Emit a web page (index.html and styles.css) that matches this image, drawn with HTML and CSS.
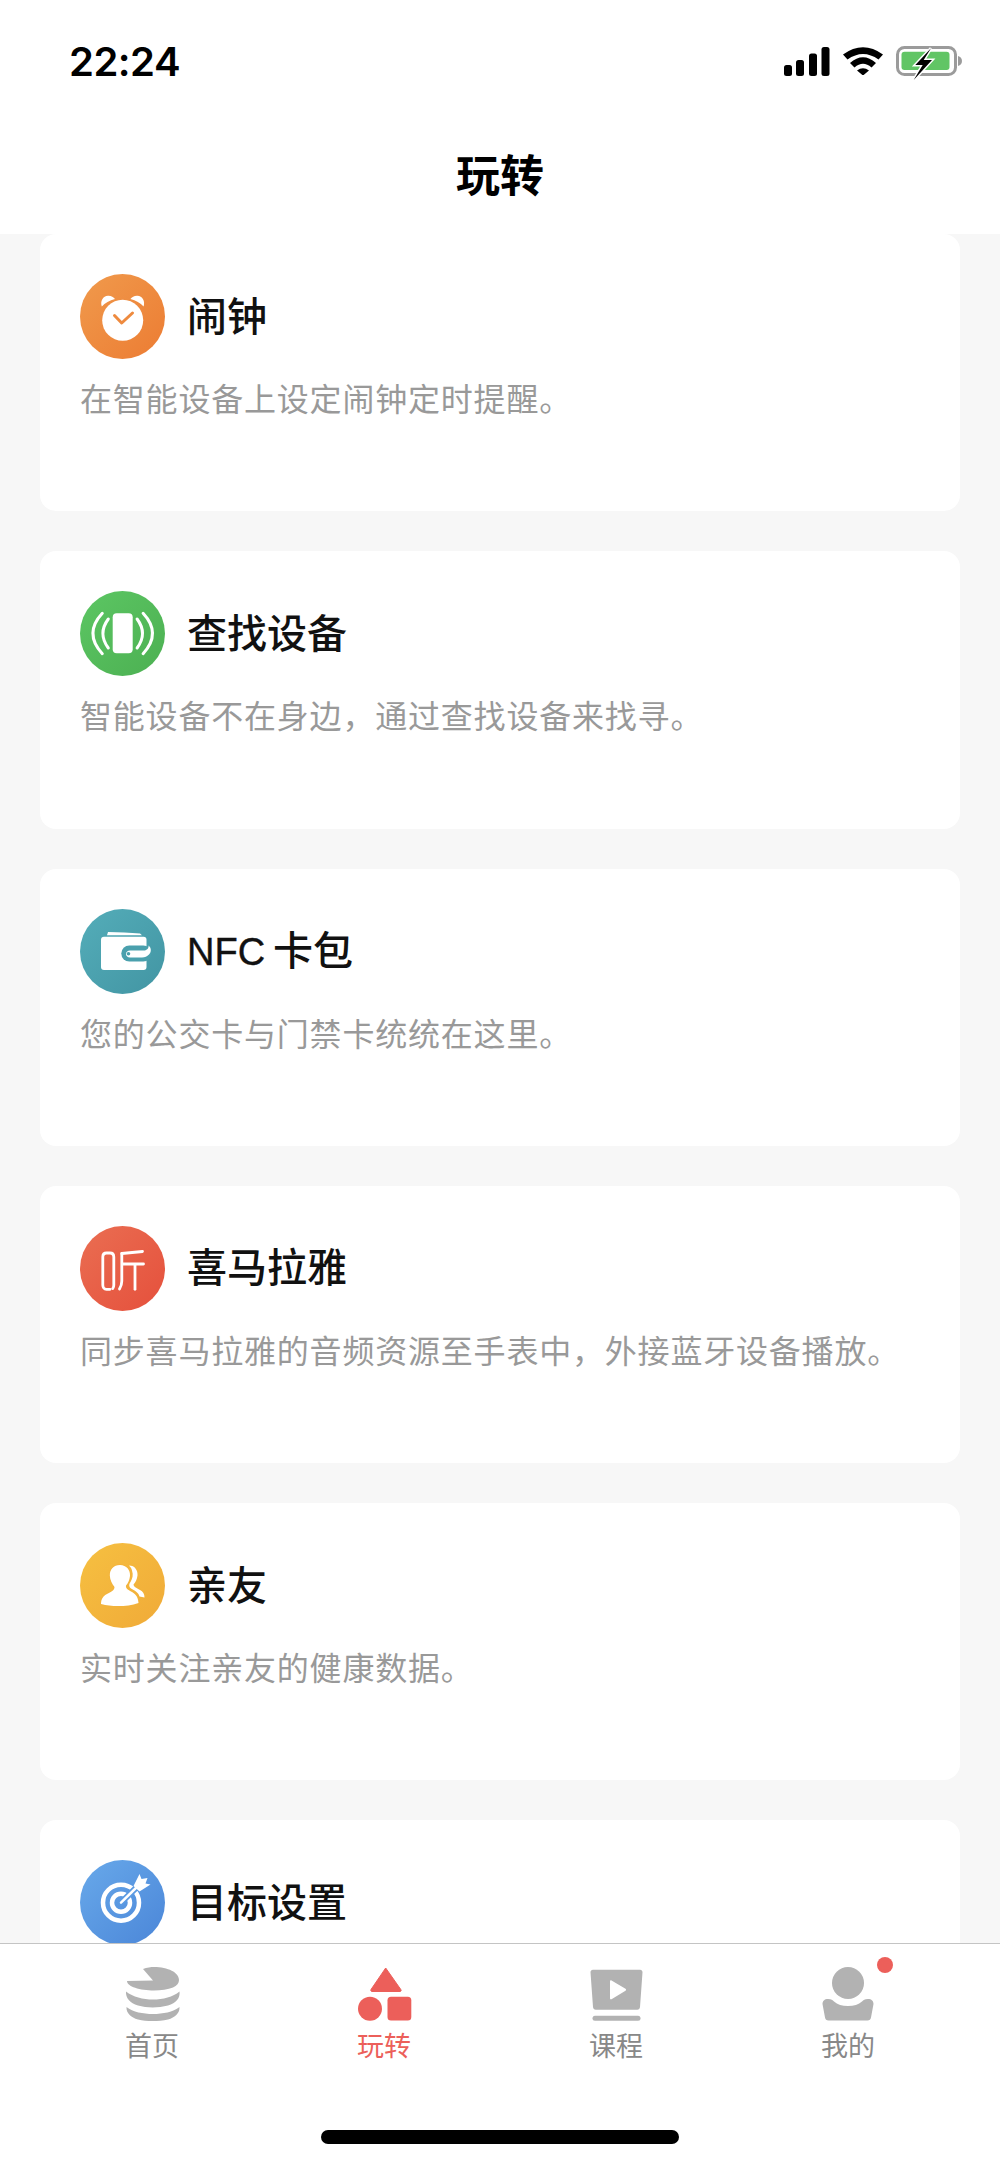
FILE: index.html
```html
<!DOCTYPE html>
<html lang="zh-CN">
<head>
    <meta charset="UTF-8">
    <meta name="viewport" content="width=device-width, initial-scale=1.0">
    <title>玩转</title>
    <link rel="stylesheet" href="styles.css">
</head>
<body>
<div class="app">
    <header class="top-bar">
        <div class="status-bar">
            <span class="time">22:24</span>
            <div class="status-icons">
                <svg class="signal" viewBox="0 0 46 29"><rect x="0" y="18" width="8" height="11" rx="2.500"/><rect x="12" y="13" width="8" height="16" rx="2.500"/><rect x="25" y="6.500" width="8" height="22.500" rx="2.500"/><rect x="37.500" y="0" width="8" height="29" rx="2.500"/></svg>
                <svg class="wifi" viewBox="0 0 40 28.500"><path d="M0 7.500Q20-7 40 7.500L35.500 12.500Q20 1.500 4.500 12.500Z"/><path d="M7 16Q20 4.500 33 16L28.500 20.500Q20 13 11.500 20.500Z"/><path d="M14 23.500Q20 19 26 23.500L20 28.500Z"/></svg>
                <svg class="battery" viewBox="0 0 66 30">
                    <rect x="1.500" y="1.500" width="58" height="27" rx="7" fill="none" stroke="#9b9b9b" stroke-width="3"/>
                    <path d="M62 10c2.500.5 4 2.500 4 5s-1.500 4.500-4 5Z" fill="#9b9b9b"/>
                    <rect x="5.500" y="5.700" width="48" height="18.300" rx="3" fill="#61c565"/>
                    <path d="M35 2.300L19.300 19H26.700L17.700 34L36 14H27.700Z" fill="#000" stroke="#fff" stroke-width="3" paint-order="stroke"/>
                </svg>
            </div>
        </div>
        <h1 class="page-title">玩转</h1>
    </header>

    <main class="feature-list">
        <section class="card">
            <div class="card-head">
                <svg class="card-icon" viewBox="0 0 85 85">
                    <defs><linearGradient id="g-orange" x1="0" y1="0" x2="1" y2="1"><stop offset="0" stop-color="#f09a4c"/><stop offset="1" stop-color="#ec7c33"/></linearGradient></defs>
                    <circle cx="42.500" cy="42.500" r="42.500" fill="url(#g-orange)"/>
                    <circle cx="42.700" cy="46.300" r="20.500" fill="#fff"/>
                    <path d="M21.800 32.500C20 27 23 22 28 21.700C31 21.500 33.500 23 35 25C29.500 26.500 25 29 21.800 32.500Z" fill="#fff"/>
                    <path d="M63.600 32.500C65.400 27 62.400 22 57.400 21.700C54.400 21.500 51.900 23 50.400 25C55.900 26.500 60.400 29 63.600 32.500Z" fill="#fff"/>
                    <path d="M34.500 41.500L41.700 49L52.500 39" fill="none" stroke="#ee8a3e" stroke-width="3" stroke-linecap="round" stroke-linejoin="round"/>
                </svg>
                <h2 class="card-title">闹钟</h2>
            </div>
            <p class="card-desc">在智能设备上设定闹钟定时提醒。</p>
        </section>

        <section class="card">
            <div class="card-head">
                <svg class="card-icon" viewBox="0 0 85 85">
                    <defs><linearGradient id="g-green" x1="0" y1="0" x2="1" y2="1"><stop offset="0" stop-color="#5cc663"/><stop offset="1" stop-color="#4cb052"/></linearGradient></defs>
                    <circle cx="42.500" cy="42.500" r="42.500" fill="url(#g-green)"/>
                    <rect x="32.700" y="22.300" width="20" height="40" rx="4" fill="#fff"/>
                    <g fill="none" stroke="#fff" stroke-width="3" stroke-linecap="round">
                        <path d="M28.300 28Q17.500 42.500 28.300 57"/>
                        <path d="M22.300 22.300Q3.500 42.500 22.300 62.700"/>
                        <path d="M57.100 28Q67.900 42.500 57.100 57"/>
                        <path d="M63.100 22.300Q81.900 42.500 63.100 62.700"/>
                    </g>
                </svg>
                <h2 class="card-title">查找设备</h2>
            </div>
            <p class="card-desc">智能设备不在身边，通过查找设备来找寻。</p>
        </section>

        <section class="card">
            <div class="card-head">
                <svg class="card-icon" viewBox="0 0 85 85">
                    <defs><linearGradient id="g-teal" x1="0" y1="0" x2="1" y2="1"><stop offset="0" stop-color="#54adb9"/><stop offset="1" stop-color="#4295a3"/></linearGradient></defs>
                    <circle cx="42.500" cy="42.500" r="42.500" fill="url(#g-teal)"/>
                    <path d="M27 26.200L28 23C39 23.300 50 23.700 60 24.500L62 26.200Z" fill="#fff"/>
                    <rect x="21" y="27.800" width="45.500" height="33.200" rx="3" fill="#fff"/>
                    <rect x="41.300" y="36.500" width="30" height="16" rx="8" fill="#4aa0ad"/>
                    <path d="M50 39.500H64C67 39.500 69 37 68.500 34.500C71.500 37 71.500 41 69 43.500C67 45.500 65 46.500 62 46.500H50C47.800 46.500 46 45.200 46 43C46 40.800 47.800 39.500 50 39.500Z" fill="#fff" transform="translate(0 2)"/>
                    <circle cx="48.500" cy="44.700" r="1.800" fill="#4aa0ad"/>
                </svg>
                <h2 class="card-title"><span class="card-title-latin">NFC</span>卡包</h2>
            </div>
            <p class="card-desc">您的公交卡与门禁卡统统在这里。</p>
        </section>

        <section class="card">
            <div class="card-head">
                <svg class="card-icon" viewBox="0 0 85 85">
                    <defs><linearGradient id="g-red" x1="0" y1="0" x2="1" y2="1"><stop offset="0" stop-color="#ea6e52"/><stop offset="1" stop-color="#e5503c"/></linearGradient></defs>
                    <circle cx="42.500" cy="42.500" r="42.500" fill="url(#g-red)"/>
                    <g fill="none" stroke="#fff" stroke-width="2.800" stroke-linecap="round" stroke-linejoin="round">
                        <path d="M30 63.300H26.500C24 63.300 22.800 61 22.800 59V31C22.800 28.500 24 27 26.500 27H30C32.500 27 33.800 28.500 33.800 31V59C33.800 60.500 33.500 61.500 32.800 62.500"/>
                        <path d="M41.800 27.500L62.500 25.500"/>
                        <path d="M41.800 27.500V55C41.800 58 41 60.500 39.500 63"/>
                        <path d="M42.500 38H63.500"/>
                        <path d="M55 38.500V63.300"/>
                    </g>
                </svg>
                <h2 class="card-title">喜马拉雅</h2>
            </div>
            <p class="card-desc">同步喜马拉雅的音频资源至手表中，外接蓝牙设备播放。</p>
        </section>

        <section class="card">
            <div class="card-head">
                <svg class="card-icon" viewBox="0 0 85 85">
                    <defs><linearGradient id="g-yellow" x1="0" y1="0" x2="1" y2="1"><stop offset="0" stop-color="#f6c041"/><stop offset="1" stop-color="#f0aa38"/></linearGradient></defs>
                    <circle cx="42.500" cy="42.500" r="42.500" fill="url(#g-yellow)"/>
                    <path d="M49 22.500C55 22.500 58 27.500 57.500 32.500C57 36.500 55.500 39.500 53.500 41.500C53.500 43.500 56 45 60 47C63 48.500 64.500 51 64.500 54.500L59.500 53.500C58.500 49.500 54.500 47.500 51 45.500C48.500 43.500 49 41 50.500 39C52.500 35.500 53.500 32 52 27.500C51.500 25.500 50.500 24 49 22.500Z" fill="#fff"/>
                    <path d="M40 22C46.500 22 50.500 27 50 33C49.500 37 48 40.500 46 42.500C45.500 45 47.500 46.500 51 48.500C55 50.500 58 53 58.500 60C52 62.500 45 63 38 63C32 63 26.500 62.500 21 61C21 56 23 53 27 51C31 49 34.500 47.500 34.500 44C32 41 30 37 29.800 32.500C29.800 26.500 33.500 22 40 22Z" fill="#fff" stroke="#f3b33c" stroke-width="1.500" paint-order="stroke"/>
                </svg>
                <h2 class="card-title">亲友</h2>
            </div>
            <p class="card-desc">实时关注亲友的健康数据。</p>
        </section>

        <section class="card">
            <div class="card-head">
                <svg class="card-icon" viewBox="0 0 85 85">
                    <defs><linearGradient id="g-blue" x1="0" y1="0" x2="1" y2="1"><stop offset="0" stop-color="#68a9ea"/><stop offset="1" stop-color="#4b86d8"/></linearGradient></defs>
                    <circle cx="42.500" cy="42.500" r="42.500" fill="url(#g-blue)"/>
                    <circle cx="41" cy="42.700" r="18" fill="none" stroke="#fff" stroke-width="4.500"/>
                    <circle cx="41" cy="42.700" r="9" fill="none" stroke="#fff" stroke-width="4.500"/>
                    <path d="M41 42.700L60 24" stroke="#5b9ae2" stroke-width="6" stroke-linecap="round"/>
                    <path d="M41 42.700L60 24" stroke="#fff" stroke-width="2.500" stroke-linecap="round"/>
                    <path d="M53.500 26L59.500 14L61.500 19L67.500 18L65.500 23.500L70.500 24.500L59.500 31.500Z" fill="#fff"/>
                </svg>
                <h2 class="card-title">目标设置</h2>
            </div>
        </section>
    </main>

    <nav class="tab-bar">
        <div class="tab-list">
            <a class="tab-item">
                <svg class="tab-icon" viewBox="0 0 54 54">
                    <path d="M17 2C21 .5 25 0 28 0C42 0 53 5.500 53 13C53 16 51 18.500 47 20.500C42 22.500 35 23.500 28 23.500C14 23.500 1 19.500 1 14L27 13.500Z"/>
                    <path d="M0 24.500C7 30 17 32.500 27 32.500C37 32.500 47 30 53.500 24.500C54.500 31 50 36 42 38.500C32 41 21 41 12 38.500C4 36 -.5 31 0 24.500Z"/>
                    <path d="M.5 40C7 45 17 47 27 47C37 47 47 45 53.500 40C54 46 49 50.500 42 52.500C32 54.500 21 54.500 12 52.500C5 50.500 0 46 .5 40Z"/>
                </svg>
                <span class="tab-label">首页</span>
            </a>
            <a class="tab-item tab-item-active">
                <svg class="tab-icon" viewBox="0 0 54 54">
                    <path d="M27.700 1L42.800 22.500C43.500 23.500 43 24.500 42 24.500H14C13 24.500 12.500 23.500 13 22.500Z" stroke="#ec5f5a" stroke-width="1" stroke-linejoin="round"/>
                    <circle cx="12" cy="41.700" r="12"/>
                    <rect x="29.500" y="29.700" width="23.800" height="23.800" rx="3.500"/>
                </svg>
                <span class="tab-label">玩转</span>
            </a>
            <a class="tab-item">
                <svg class="tab-icon" viewBox="0 0 54 54">
                    <path d="M3 2.700H50C51.500 2.700 52.500 3.800 52.500 5.200L50 40C49.900 41.600 48.800 42.700 47.200 42.700H5.800C4.200 42.700 3.100 41.600 3 40L.5 5.200C.5 3.800 1.500 2.700 3 2.700Z"/>
                    <path d="M21.500 13.500L35.500 21.700C36.300 22.200 36.300 23.200 35.500 23.700L21.500 32.300C20.700 32.700 20 32.200 20 31.300V14.500C20 13.600 20.700 13 21.500 13.500Z" fill="#fff"/>
                    <rect x="2.500" y="48.700" width="48" height="5" rx="2.500"/>
                </svg>
                <span class="tab-label">课程</span>
            </a>
            <a class="tab-item">
                <svg class="tab-icon" viewBox="0 0 54 54">
                    <circle cx="26" cy="16" r="16"/>
                    <path d="M6 32C9.500 32 10.500 33 12 34.500C15.500 37.500 20 39 26 39C32 39 36.500 37.500 40 34.500C41.500 33 42.500 32 46 32C49.500 32 51.500 34 51.500 37L49 50.500C48.700 52.500 47.500 53.500 45.500 53.500H6.500C4.500 53.500 3.300 52.500 3 50.500L.5 37C.5 34 2.500 32 6 32Z"/>
                </svg>
                <span class="tab-badge"></span>
                <span class="tab-label">我的</span>
            </a>
        </div>
        <div class="home-indicator"></div>
    </nav>
</div>
</body>
</html>
```

FILE: styles.css
```css
* {
    box-sizing: border-box;
}
body {
    margin: 0;
    font-family: "Liberation Sans", "Noto Sans CJK SC", sans-serif;
    background-color: #f7f7f7;
}
.app {
    display: flex;
    flex-direction: column;
    height: 2165px;
    overflow: hidden;
}
/* Status bar and page title */
.top-bar {
    height: 234px;
    flex-shrink: 0;
    background-color: #fff;
}
.status-bar {
    display: flex;
    justify-content: space-between;
    align-items: center;
    height: 122px;
    padding: 0 38px 0 69px;
}
.time {
    font-family: "Inter", sans-serif;
    font-size: 40px;
    font-weight: 600;
    letter-spacing: -0.5px;
    color: #000;
}
.status-icons {
    display: flex;
    align-items: center;
    gap: 13px;
}
.signal {
    width: 46px;
    height: 29px;
}
.wifi {
    width: 40px;
    height: 28.500px;
}
.battery {
    width: 66px;
    height: 30px;
    overflow: visible;
}
.page-title {
    margin: 0;
    font-family: "Noto Sans CJK SC", sans-serif;
    font-size: 44px;
    font-weight: 700;
    line-height: 102px;
    text-align: center;
    color: #000;
}
/* Feature cards */
.feature-list {
    flex: 1;
    min-height: 0;
    overflow: hidden;
    display: flex;
    flex-direction: column;
    gap: 40px;
    padding: 0 40px;
}
.card {
    flex-shrink: 0;
    height: 277.250px;
    padding: 40px;
    border-radius: 16px;
    background-color: #fff;
}
.card-head {
    display: flex;
    align-items: center;
    gap: 22px;
}
.card-icon {
    width: 85px;
    height: 85px;
    flex-shrink: 0;
}
.card-title {
    margin: 0 0 6px;
    font-family: "Noto Sans CJK SC", sans-serif;
    font-size: 40px;
    font-weight: 500;
    line-height: 58px;
    color: #111;
}
.card-title-latin {
    margin-right: 8px;
    font-family: "Liberation Sans", sans-serif;
    font-size: 38px;
    font-weight: 400;
    line-height: 1;
    -webkit-text-stroke: 0.4px #111;
}
.card-desc {
    margin: 16px 0 0;
    font-family: "Noto Sans CJK SC", sans-serif;
    font-size: 32px;
    font-weight: 400;
    line-height: 44px;
    letter-spacing: 0.800px;
    color: #999;
}
/* Bottom tabs */
.tab-bar {
    height: 222px;
    flex-shrink: 0;
    border-top: 1px solid #c4c4c4;
    background-color: #fff;
}
.tab-list {
    display: grid;
    grid-template-columns: repeat(4, 1fr);
    padding: 23px 35px 0 37px;
}
.tab-item {
    position: relative;
    display: flex;
    flex-direction: column;
    align-items: center;
    gap: 4px;
    color: #888;
}
.tab-icon {
    width: 54px;
    height: 54px;
    fill: #b2b2b2;
    overflow: visible;
}
.tab-label {
    margin-right: 2px;
    font-family: "Noto Sans CJK SC", sans-serif;
    font-size: 27px;
    line-height: 40px;
}
.tab-item-active {
    color: #ec5f5a;
}
.tab-item-active .tab-icon {
    fill: #ec5f5a;
}
.tab-badge {
    position: absolute;
    top: -10px;
    left: 144px;
    width: 16px;
    height: 16px;
    border-radius: 50%;
    background-color: #ec5f5a;
}
.home-indicator {
    width: 358px;
    height: 14px;
    margin: 65px auto 0;
    border-radius: 7px;
    background-color: #000;
}
```
